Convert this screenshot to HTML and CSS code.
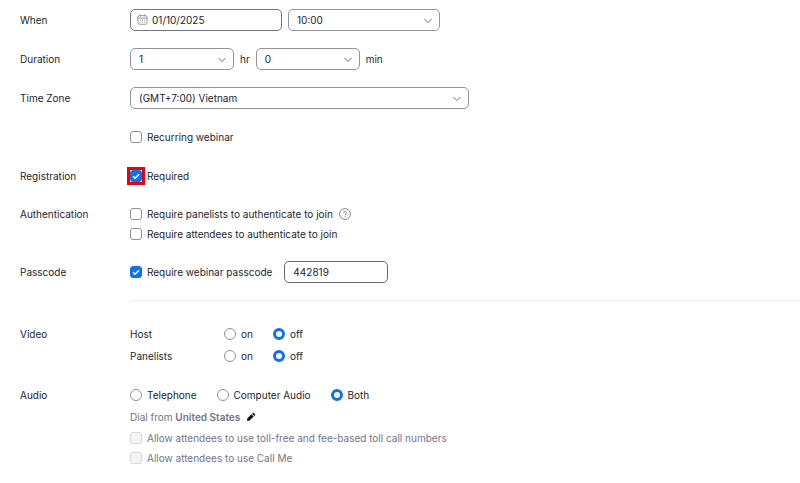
FILE: index.html
```html
<!DOCTYPE html>
<html lang="en">
<head>
<meta charset="utf-8">
<title>Schedule a Webinar</title>
<link rel="stylesheet" href="styles.css">
</head>
<body>
<form class="form">
  <div class="row">
    <label class="name" for="date">When</label>
    <div class="line">
      <span class="field field-date">
        <svg class="calendar" viewBox="0 0 12 12" aria-hidden="true"><rect x="1" y="1.8" width="10" height="9.4" rx="1.6"/><path d="M1 4.5h10M3.7 .4v2.4M8.3 .4v2.4"/><path class="dots" d="M3 6.7h6M3 8.9h6"/></svg>
        <input class="control" id="date" type="text" value="01/10/2025">
      </span>
      <span class="field field-time">
        <select class="control" aria-label="Start time"><option>10:00</option></select>
        <svg class="chevron" viewBox="0 0 8 6" aria-hidden="true"><path d="M.5 1 4 4.5 7.500 1"/></svg>
      </span>
    </div>
  </div>
  <div class="row">
    <label class="name" for="hours">Duration</label>
    <div class="line">
      <span class="field field-short">
        <select class="control" id="hours"><option>1</option></select>
        <svg class="chevron" viewBox="0 0 8 6" aria-hidden="true"><path d="M.5 1 4 4.5 7.500 1"/></svg>
      </span>
      <label for="hours">hr</label>
      <span class="field field-short">
        <select class="control" id="minutes"><option>0</option></select>
        <svg class="chevron" viewBox="0 0 8 6" aria-hidden="true"><path d="M.5 1 4 4.5 7.500 1"/></svg>
      </span>
      <label for="minutes">min</label>
    </div>
  </div>
  <div class="row">
    <label class="name" for="zone">Time Zone</label>
    <div class="line">
      <span class="field field-zone">
        <select class="control" id="zone"><option>(GMT+7:00) Vietnam</option></select>
        <svg class="chevron" viewBox="0 0 8 6" aria-hidden="true"><path d="M.5 1 4 4.5 7.500 1"/></svg>
      </span>
    </div>
  </div>
  <div class="row">
    <span class="name"></span>
    <div class="line"><label class="choice"><input class="box" type="checkbox">Recurring webinar</label></div>
  </div>
  <div class="row">
    <span class="name">Registration</span>
    <div class="line"><label class="choice"><span class="marked"><input class="box" type="checkbox" checked></span>Required</label></div>
  </div>
  <div class="row compact">
    <span class="name">Authentication</span>
    <div class="lines">
      <div class="line">
        <label class="choice"><input class="box" type="checkbox">Require panelists to authenticate to join</label>
        <button class="icon-button" type="button" aria-label="Help">
          <svg class="help" viewBox="0 0 12 12" aria-hidden="true"><circle cx="6" cy="6" r="5.400"/><path d="M4.5 4.800c0-2 3-1.900 3 0C7.500 5.900 6 5.900 6 7.200M6 8.200v1"/></svg>
        </button>
      </div>
      <div class="line"><label class="choice"><input class="box" type="checkbox">Require attendees to authenticate to join</label></div>
    </div>
  </div>
  <div class="row">
    <span class="name">Passcode</span>
    <div class="line passcode">
      <label class="choice"><input class="box" type="checkbox" checked>Require webinar passcode</label>
      <span class="field field-short"><input class="control dark" type="text" value="442819" aria-label="Passcode"></span>
    </div>
  </div>
  <hr class="divider">
  <div class="row">
    <span class="name">Video</span>
    <div class="lines">
      <div class="line options">
        <span class="who">Host</span>
        <label class="choice"><input class="dot" type="radio" name="host">on</label>
        <label class="choice"><input class="dot" type="radio" name="host" checked>off</label>
      </div>
      <div class="line options">
        <span class="who">Panelists</span>
        <label class="choice"><input class="dot" type="radio" name="panelists">on</label>
        <label class="choice"><input class="dot" type="radio" name="panelists" checked>off</label>
      </div>
    </div>
  </div>
  <div class="row">
    <span class="name">Audio</span>
    <div class="lines">
      <div class="line options">
        <label class="choice"><input class="dot" type="radio" name="audio">Telephone</label>
        <label class="choice"><input class="dot" type="radio" name="audio">Computer Audio</label>
        <label class="choice"><input class="dot" type="radio" name="audio" checked>Both</label>
      </div>
      <div class="muted">
        <div class="line">
          <span>Dial from <b>United States</b></span>
          <button class="icon-button" type="button" aria-label="Edit countries">
            <svg class="pencil" viewBox="0 0 10 10" aria-hidden="true"><path d="M1 9l.4-2.700L5.400 2.300l2.300 2.300L3.700 8.600zM6 1.700l.8-.8q.5-.4 1 0L9.100 2.200q.4.500 0 1l-.8.8z"/></svg>
          </button>
        </div>
        <div class="compact">
          <div class="line"><label class="choice"><input class="box" type="checkbox" disabled>Allow attendees to use toll-free and fee-based toll call numbers</label></div>
          <div class="line"><label class="choice"><input class="box" type="checkbox" disabled>Allow attendees to use Call Me</label></div>
        </div>
      </div>
    </div>
  </div>
</form>
</body>
</html>
```
FILE: styles.css
```css
* { box-sizing: border-box; }

body {
  margin: 0;
  background: #fff;
  color: #24252d;
  font: 10px/20px Inter, "Liberation Sans", sans-serif;
}

.form {
  display: flex;
  flex-direction: column;
  gap: 17px;
  padding: 9px 0 16px 20px;
}

.row {
  display: grid;
  grid-template-columns: 110px 1fr;
}

.name { line-height: 22px; }

.line {
  display: flex;
  align-items: center;
  gap: 6px;
  min-height: 22px;
}

.compact .line { min-height: 20px; }
.compact .name { line-height: 20px; }

.options { gap: 20px; }
.passcode { gap: 12px; }
.who { width: 74px; }

.field {
  position: relative;
  display: block;
}

.field-date { width: 152px; }
.field-time { width: 152px; }
.field-short { width: 104px; }
.field-zone { width: 339px; }

.control {
  appearance: none;
  display: block;
  width: 100%;
  height: 22px;
  margin: 0;
  padding: 0 20px 0 8px;
  border: 1px solid #92939d;
  border-radius: 5px;
  background: #fff;
  color: inherit;
  font: inherit;
}

.field-date .control {
  padding-left: 21px;
  border-color: #74757f;
}

.control.dark { border-color: #686974; }

.chevron {
  position: absolute;
  top: 9px;
  right: 8px;
  width: 8px;
  height: 6px;
  fill: none;
  stroke: #6e7079;
  pointer-events: none;
}

.calendar {
  position: absolute;
  top: 5px;
  left: 7px;
  width: 11px;
  height: 11px;
  fill: none;
  stroke: #81838c;
  stroke-width: 0.9;
}

.calendar .dots { stroke-dasharray: 1.2 1.2; }

.choice {
  display: flex;
  align-items: center;
  gap: 5px;
}

.box,
.dot {
  appearance: none;
  display: block;
  width: 12px;
  height: 12px;
  margin: 0;
  border: 1px solid #909199;
  background: #fff;
}

.box { border-radius: 3px; }
.dot { border-radius: 50%; }

.box:checked {
  border-color: #0e72ed;
  background: #0e72ed url("data:image/svg+xml,%3Csvg xmlns='http://www.w3.org/2000/svg' viewBox='0 0 10 10'%3E%3Cpath d='M2 5.200l2 2 4-4' fill='none' stroke='white' stroke-width='1.500'/%3E%3C/svg%3E") center / 10px 10px no-repeat;
}

.marked { outline: 3px solid #e80013; }

.box:disabled {
  border-color: #d5d7da;
  background: #f3f4f5;
}

.dot:checked { border: 3px solid #0e72ed; }

.muted { color: #747487; }

.icon-button {
  display: flex;
  padding: 0;
  border: 0;
  background: none;
}

.help {
  width: 12px;
  height: 12px;
  fill: none;
  stroke: #6e7680;
  stroke-width: 0.9;
}

.pencil {
  width: 10px;
  height: 10px;
  fill: #131619;
}

b { font-weight: 600; }

.divider {
  width: calc(100% - 110px);
  margin: 0 0 5px 110px;
  border: 0;
  border-top: 1px solid #ededf2;
}
```
